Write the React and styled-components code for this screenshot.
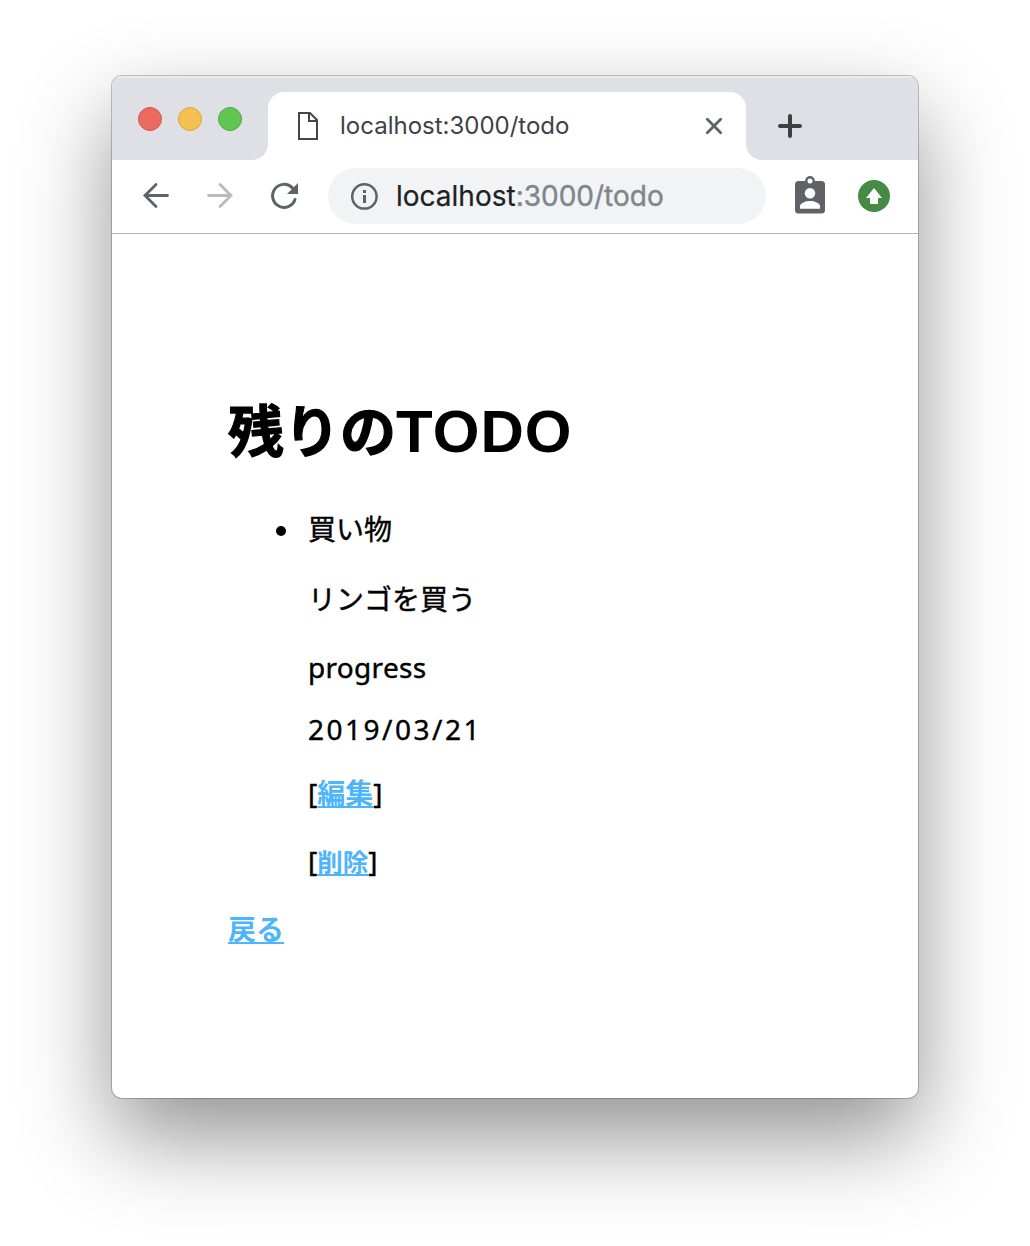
import React from "react";
import styled, { createGlobalStyle } from "styled-components";

const GlobalStyle = createGlobalStyle`
  *, *::before, *::after { box-sizing: border-box; }
  html, body { margin: 0; background: #fff; }
`;

const Desktop = styled.div`
  width: 1030px;
  height: 1246px;
  padding: 76px 112px 148px;
  overflow: hidden;
`;

const Window = styled.div`
  display: flex;
  flex-direction: column;
  width: 806px;
  height: 1022px;
  border-radius: 10px;
  overflow: hidden;
  background: #fff;
  box-shadow: 0 0 0 1px rgba(0, 0, 0, 0.22), 0 39px 90px rgba(0, 0, 0, 0.43);
`;

const TabStrip = styled.header`
  display: flex;
  height: 84px;
  flex: none;
`;

const StripStart = styled.div`
  display: flex;
  gap: 16px;
  width: 156px;
  padding: 31px 0 0 26px;
  background: #dfe0e6;
  border-bottom-right-radius: 16px;
  box-shadow: inset 0 2px 0 rgba(255, 255, 255, 0.35);
`;

const Light = styled.span`
  width: 24px;
  height: 24px;
  border-radius: 50%;
  background: ${(p) => p.$fill};
  border: 1px solid ${(p) => p.$edge};
`;

const TabSlot = styled.div`
  width: 478px;
  padding-top: 16px;
  background: linear-gradient(#dfe0e6 50%, #fff 50%);
  box-shadow: inset 0 2px 0 rgba(255, 255, 255, 0.35);
`;

const Tab = styled.div`
  display: flex;
  align-items: center;
  height: 68px;
  padding: 0 22px 0 29px;
  background: #fff;
  border-radius: 16px 16px 0 0;
`;

const TabTitle = styled.span`
  flex: 1;
  margin-left: 21px;
  font: 400 24px/30px Inter, "Liberation Sans", sans-serif;
  letter-spacing: 0;
  color: #3f4246;
  white-space: nowrap;
`;

const StripEnd = styled.div`
  flex: 1;
  padding: 37px 0 0 31px;
  background: #dfe0e6;
  border-bottom-left-radius: 16px;
  box-shadow: inset 0 2px 0 rgba(255, 255, 255, 0.35);
`;

const Icon = styled.svg`
  display: block;
  flex: none;
  fill: none;
`;

const Toolbar = styled.nav`
  display: flex;
  align-items: center;
  height: 74px;
  flex: none;
  padding: 0 28px 1px 28px;
  border-bottom: 1px solid #b3b3b3;
`;

const NavButtons = styled.div`
  display: flex;
  gap: 32px;
  width: 188px;
`;

const AddressBar = styled.div`
  display: flex;
  align-items: center;
  width: 438px;
  height: 56px;
  padding-left: 22px;
  border-radius: 28px;
  background: #f1f3f5;
`;

const Address = styled.span`
  margin-left: 18px;
  font: 400 28px/36px Inter, "Liberation Sans", sans-serif;
  letter-spacing: 0;
  color: #202124;
  white-space: nowrap;
  -webkit-text-stroke: 0.2px currentColor;
`;

const AddressRest = styled.span`
  color: #80868b;
  -webkit-text-stroke: 0.4px currentColor;
`;

const Extensions = styled.div`
  display: flex;
  align-items: center;
  gap: 32px;
  margin-left: 28px;
`;

const Page = styled.main`
  flex: 1;
  padding: 166px 116px 0;
  font: 400 28px/34px "Noto Sans", "Noto Sans CJK JP", sans-serif;
  color: #000;
`;

const Heading = styled.h1`
  margin: 0;
  height: 60px;
  font-size: 56px;
  line-height: 60px;
  font-weight: 700;
  white-space: nowrap;
  -webkit-text-stroke: 1.2px currentColor;
`;

const HeadingLatin = styled.span`
  font-family: "Liberation Sans", sans-serif;
  font-size: 60px;
  line-height: 1;
  letter-spacing: 1.1px;
  -webkit-text-stroke: 0;
`;

const TodoList = styled.ul`
  margin: 52px 0 34px;
  padding: 0;
  list-style: none;
`;

const TodoItem = styled.li`
  display: flex;
`;

const Bullet = styled.span`
  flex: none;
  width: 10px;
  height: 10px;
  margin: 14px 22px 0 48px;
  border-radius: 50%;
  background: #000;
`;

const Line = styled.p`
  height: 34px;
  margin: ${(p) => p.$gap || 0}px 0 0;
  letter-spacing: ${(p) => p.$spacing || 0}px;
  -webkit-text-stroke: 0.4px currentColor;
`;

const Link = styled.a`
  color: #4db5fb;
  font-size: ${(p) => (p.$small ? 25.5 : 28)}px;
  font-weight: 700;
  -webkit-text-stroke: 0;
  text-decoration: underline;
  text-decoration-thickness: 2px;
  text-underline-offset: 2px;
  text-decoration-skip-ink: none;
`;

export default function App() {
  return (
    <Desktop>
      <GlobalStyle />
      <Window>
        <TabStrip>
          <StripStart>
            <Light $fill="#ec6b60" $edge="#dd5148" />
            <Light $fill="#f5c04f" $edge="#dda440" />
            <Light $fill="#62c655" $edge="#4dad3d" />
          </StripStart>
          <TabSlot>
            <Tab>
              <Icon width="22" height="28" viewBox="0 0 22 28" stroke="#464646" strokeWidth="2">
                <path d="M2 1H13L20 8V27H2Z" />
                <path d="M12 1V9H20" />
              </Icon>
              <TabTitle>localhost:3000/todo</TabTitle>
              <Icon width="20" height="20" viewBox="0 0 20 20" stroke="#5f6368" strokeWidth="2.8" strokeLinecap="round">
                <path d="M3.3 3.3 16.7 16.7M16.7 3.3 3.3 16.7" />
              </Icon>
            </Tab>
          </TabSlot>
          <StripEnd>
            <Icon width="26" height="26" viewBox="0 0 26 26" stroke="#3c4043" strokeWidth="4" strokeLinecap="round">
              <path d="M13 3V23M3 13H23" />
            </Icon>
          </StripEnd>
        </TabStrip>
        <Toolbar>
          <NavButtons>
            <Icon width="32" height="32" viewBox="0 0 32 32" stroke="#5f6368" strokeWidth="2.8" strokeLinecap="round">
              <path d="M27.5 15.5H5M16 4.5 5 15.5 16 26.5" />
            </Icon>
            <Icon width="32" height="32" viewBox="0 0 32 32" stroke="#babbbd" strokeWidth="2.8" strokeLinecap="round">
              <path d="M4.5 15.5H27M16 4.5 27 15.5 16 26.5" />
            </Icon>
            <Icon width="32" height="32" viewBox="0 0 32 32">
              <path d="M24.4 7.9A11.5 11.5 0 1 0 27 19.5" stroke="#5f6368" strokeWidth="3" strokeLinecap="round" />
              <path d="M30 3V14H19Z" fill="#5f6368" />
            </Icon>
          </NavButtons>
          <AddressBar>
            <Icon width="28" height="28" viewBox="0 0 28 28">
              <circle cx="14.4" cy="14.4" r="12.2" stroke="#5f6368" strokeWidth="2.5" />
              <path d="M13 8h3v3h-3zM13 13h3v8h-3z" fill="#5f6368" />
            </Icon>
            <Address>
              localhost<AddressRest>:3000/todo</AddressRest>
            </Address>
          </AddressBar>
          <Extensions>
            <Icon width="32" height="40" viewBox="0 0 32 40">
              <rect x="1" y="5" width="30" height="32.6" rx="3.5" fill="#5f6368" />
              <circle cx="16" cy="5" r="3.7" fill="#fff" stroke="#5f6368" strokeWidth="2.4" />
              <circle cx="16" cy="17.3" r="5.2" fill="#fff" />
              <path d="M6 32.7V30.3C6 27 12 25 16 25S26 27 26 30.3V32.7Z" fill="#fff" />
            </Icon>
            <Icon width="32" height="32" viewBox="0 0 32 32">
              <circle cx="16" cy="16" r="16" fill="#458b45" />
              <path d="M16 8 24 18H20V24H12V18H8Z" fill="#fff" />
            </Icon>
          </Extensions>
        </Toolbar>
        <Page lang="ja">
          <Heading>
            残りの<HeadingLatin>TODO</HeadingLatin>
          </Heading>
          <TodoList>
            <TodoItem>
              <Bullet />
              <div>
                <Line>買い物</Line>
                <Line $gap={36}>リンゴを買う</Line>
                <Line $gap={34} $spacing={0.3}>progress</Line>
                <Line $gap={28} $spacing={2.5}>2019/03/21</Line>
                <Line $gap={30}>
                  [<Link>編集</Link>]
                </Line>
                <Line $gap={34}>
                  [<Link $small>削除</Link>]
                </Line>
              </div>
            </TodoItem>
          </TodoList>
          <Link>戻る</Link>
        </Page>
      </Window>
    </Desktop>
  );
}
